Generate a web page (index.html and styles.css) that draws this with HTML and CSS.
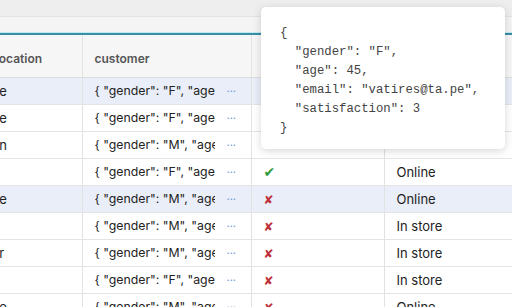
FILE: index.html
```html
<!DOCTYPE html>
<html lang="en">
<head>
<meta charset="UTF-8" />
<title>Orders</title>
<link rel="stylesheet" href="styles.css">
</head>
<body>

<div class="toolbar"></div>
<div class="subbar"></div>
<div class="accent"></div>

<div class="grid-wrap">
  <table class="grid">
    <colgroup>
      <col class="col-loc">
      <col class="col-cust">
      <col class="col-flag">
      <col>
    </colgroup>
    <thead>
      <tr>
        <th>Location</th>
        <th>customer</th>
        <th></th>
        <th></th>
      </tr>
    </thead>
    <tbody>
      <tr class="selected">
        <td>Le</td>
        <td><div class="json"><span class="json-text">{ "gender": "F", "age": 45 }</span><span class="more">···</span></div></td>
        <td></td>
        <td></td>
      </tr>
      <tr>
        <td>Le</td>
        <td><div class="json"><span class="json-text">{ "gender": "F", "age": 31 }</span><span class="more">···</span></div></td>
        <td></td>
        <td></td>
      </tr>
      <tr>
        <td>Ln</td>
        <td><div class="json"><span class="json-text">{ "gender": "M", "age": 52 }</span><span class="more">···</span></div></td>
        <td></td>
        <td></td>
      </tr>
      <tr>
        <td></td>
        <td><div class="json"><span class="json-text">{ "gender": "F", "age": 27 }</span><span class="more">···</span></div></td>
        <td><span class="yes">✔</span></td>
        <td>Online</td>
      </tr>
      <tr class="selected">
        <td>Le</td>
        <td><div class="json"><span class="json-text">{ "gender": "M", "age": 38 }</span><span class="more">···</span></div></td>
        <td><span class="no">✘</span></td>
        <td>Online</td>
      </tr>
      <tr>
        <td></td>
        <td><div class="json"><span class="json-text">{ "gender": "M", "age": 61 }</span><span class="more">···</span></div></td>
        <td><span class="no">✘</span></td>
        <td>In store</td>
      </tr>
      <tr>
        <td>Lr</td>
        <td><div class="json"><span class="json-text">{ "gender": "M", "age": 44 }</span><span class="more">···</span></div></td>
        <td><span class="no">✘</span></td>
        <td>In store</td>
      </tr>
      <tr>
        <td></td>
        <td><div class="json"><span class="json-text">{ "gender": "F", "age": 23 }</span><span class="more">···</span></div></td>
        <td><span class="no">✘</span></td>
        <td>In store</td>
      </tr>
      <tr>
        <td>Le</td>
        <td><div class="json"><span class="json-text">{ "gender": "M", "age": 35 }</span><span class="more">···</span></div></td>
        <td><span class="no">✘</span></td>
        <td>Online</td>
      </tr>
    </tbody>
  </table>
</div>

<div class="popover"><pre>{
  "gender": "F",
  "age": 45,
  "email": "vatires@ta.pe",
  "satisfaction": 3
}</pre></div>

</body>
</html>
```

FILE: styles.css
```css
body {
  margin: 0;
  font-family: Inter, 'Noto Sans', sans-serif;
  background-color: #fff;
  color: #222;
  overflow: hidden;
}

.toolbar { height: 16px; background-color: #eeeeee; border-bottom: 1px solid #e3e3e3; }
.subbar { height: 15px; background-color: #f4f4f4; }
.accent { height: 2px; background-color: #3a8ea6; border-top: 1px solid #c3eaf1; }

.grid-wrap {
  overflow: hidden;
}

.grid {
  border-collapse: collapse;
  table-layout: fixed;
  margin-left: -20px;
  width: 560px;
  font-size: 13px;
}

.col-loc { width: 102px; }
.col-cust { width: 169px; }
.col-flag { width: 133px; }

.grid th {
  box-sizing: border-box;
  height: 42px;
  padding: 5px 0 0 12px;
  background-color: #f6f6f6;
  color: #555;
  font-size: 12px;
  font-weight: 600;
  text-align: left;
  border-right: 1px solid #e2e2e2;
  border-bottom: 1px solid #dcdcdc;
  white-space: nowrap;
}

.grid td {
  box-sizing: border-box;
  height: 27px;
  padding: 0 0 0 12px;
  border-right: 1px solid #e2e2e2;
  border-bottom: 1px solid #e4e4e4;
  white-space: nowrap;
  overflow: hidden;
}

.grid tr.selected td { background-color: #e9eef8; }

.json {
  display: flex;
  align-items: center;
}

.json-text {
  width: 120px;
  overflow: hidden;
  white-space: nowrap;
  font-size: 12.3px;
}

.more {
  margin-left: 12px;
  color: #6b98d8;
  font-size: 11px;
}

.yes { color: #2e9a3e; font-family: 'DejaVu Sans', sans-serif; font-size: 14px; }
.no { color: #c0303a; font-family: 'DejaVu Sans', sans-serif; font-size: 12px; }

.popover {
  position: absolute;
  left: 261px;
  top: 7px;
  width: 244px;
  padding: 17px 0 11px 19px;
  box-sizing: border-box;
  background-color: #fff;
  border-radius: 5px;
  box-shadow: 0 2px 9px rgba(0,0,0,0.16);
}

.popover pre {
  margin: 0;
  font-family: 'Liberation Mono', monospace;
  font-size: 12.3px;
  line-height: 19px;
  color: #444;
}
```
